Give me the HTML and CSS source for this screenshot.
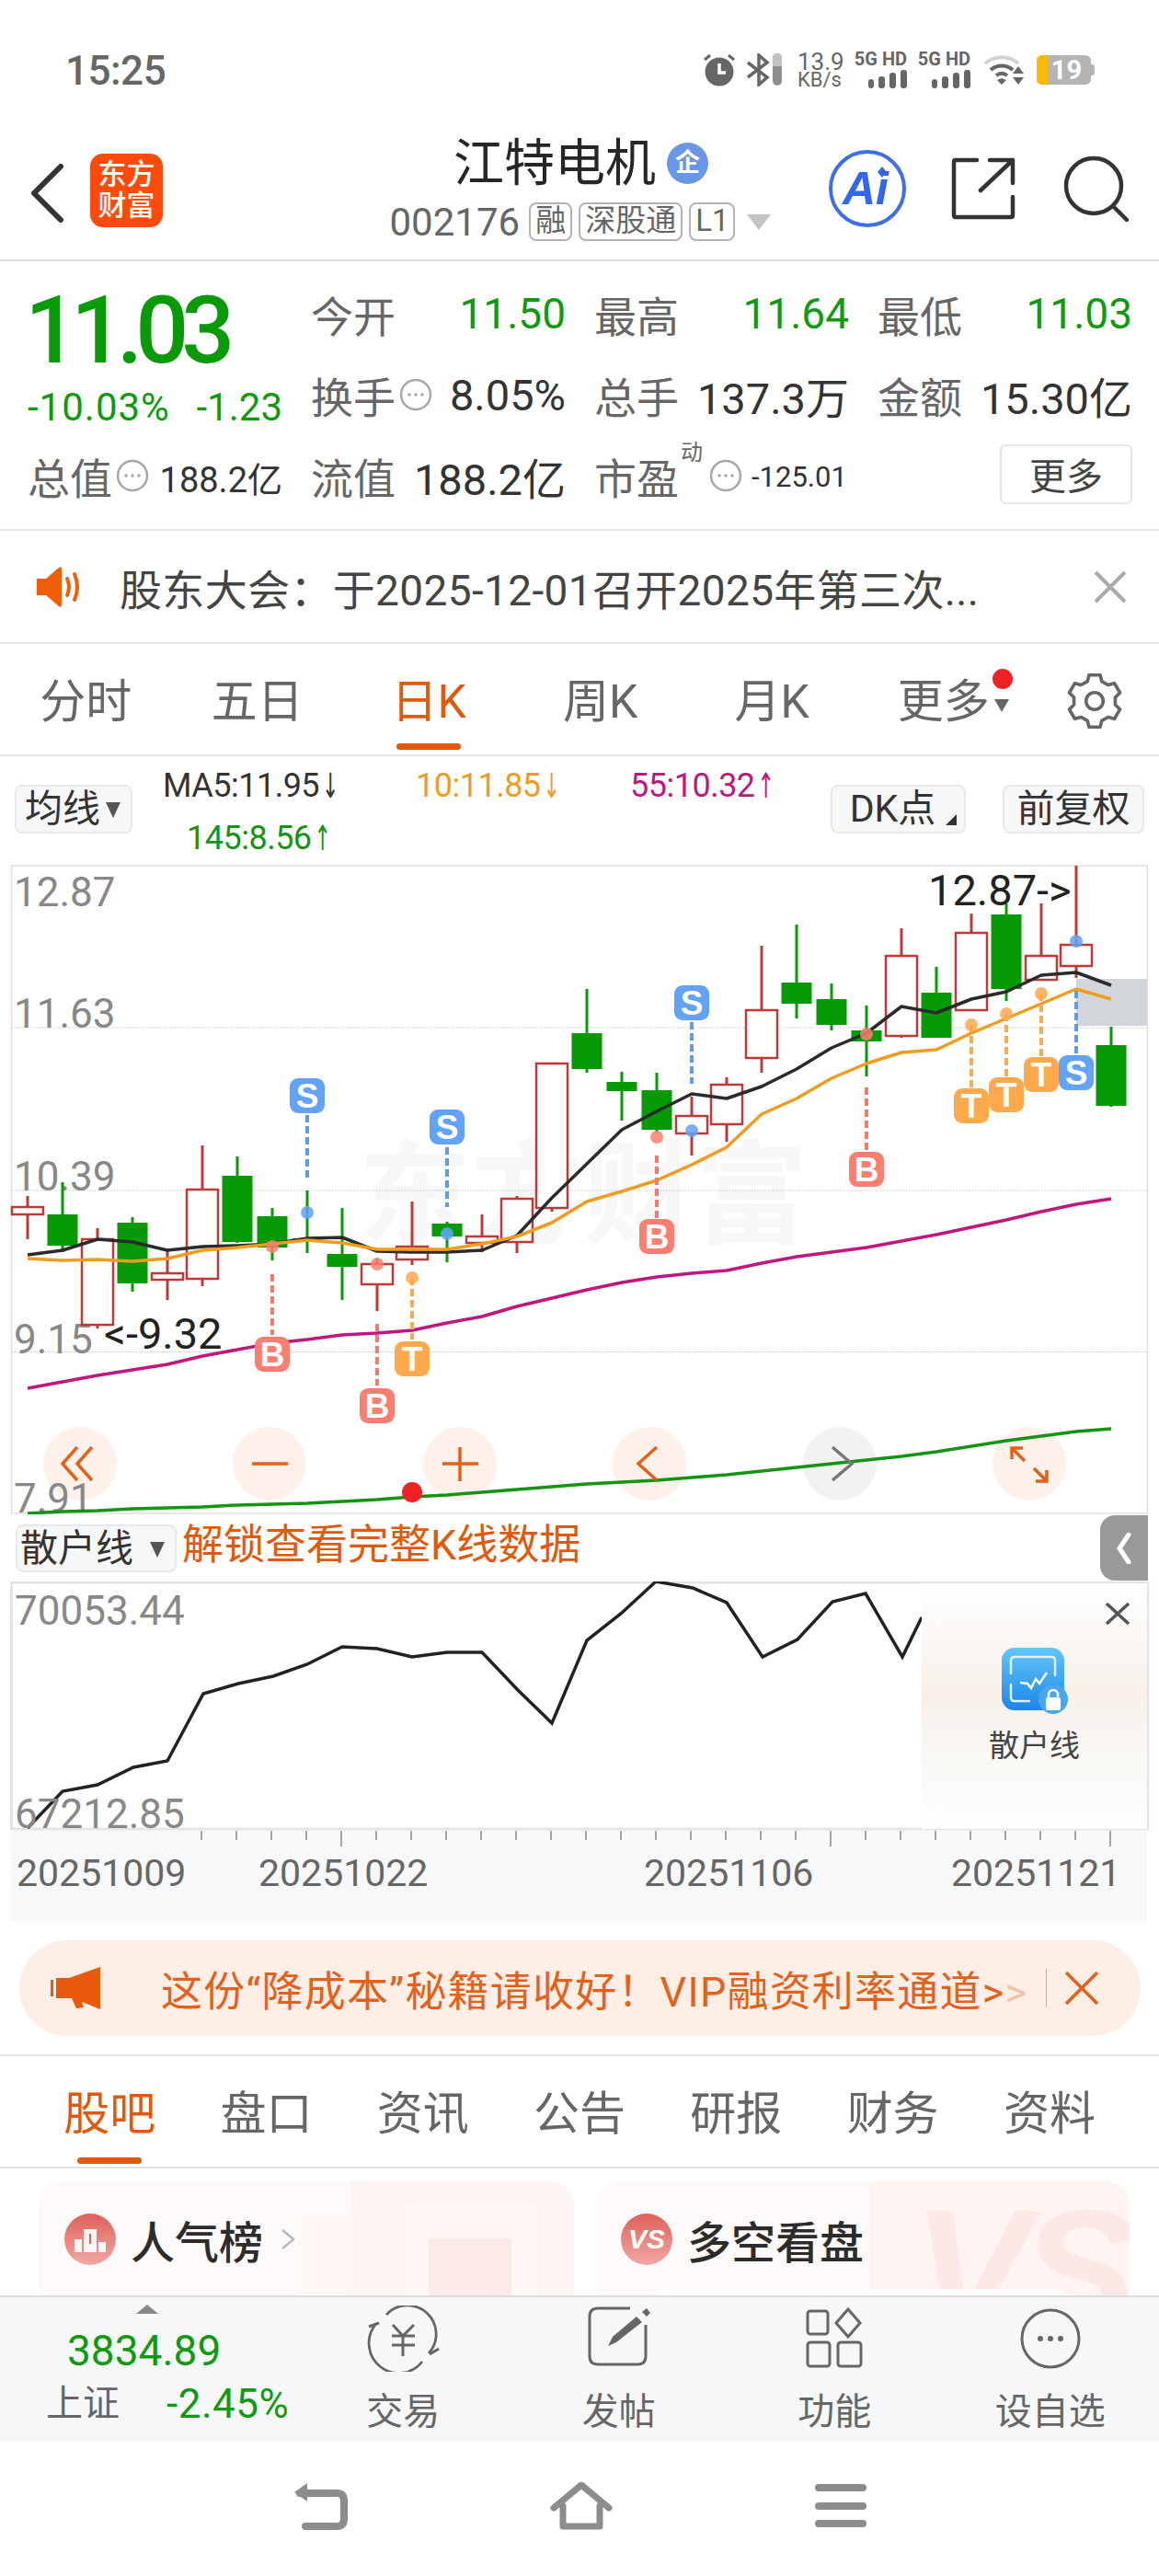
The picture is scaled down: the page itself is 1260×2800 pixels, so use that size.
FILE: index.html
```html
<!DOCTYPE html>
<html lang="zh-CN">
<head>
  <meta charset="UTF-8">
  <meta name="viewport" content="width=device-width, initial-scale=1.0">
  <title>江特电机</title>
  <link rel="stylesheet" href="styles.css">
</head>
<body>
  <svg class="defs" width="0" height="0">
    <symbol id="dots" viewBox="0 0 36 36">
      <circle cx="18" cy="18" r="16" fill="none" stroke="#a8a8a8" stroke-width="2.5"/>
      <circle cx="11" cy="18" r="1.8" fill="#a8a8a8"/>
      <circle cx="18" cy="18" r="1.8" fill="#a8a8a8"/>
      <circle cx="25" cy="18" r="1.8" fill="#a8a8a8"/>
    </symbol>
    <symbol id="cell-bars" viewBox="0 0 42 20">
      <rect x="0" y="10" width="6" height="10" rx="3"/>
      <rect x="11" y="7" width="7" height="13" rx="3"/>
      <rect x="23" y="3" width="7" height="17" rx="3"/>
      <rect x="35" y="0" width="7" height="20" rx="3"/>
    </symbol>
  </svg>

  <div class="status-bar">
    <span class="clock">15:25</span>
    <div class="status-icons">
      <svg class="ic-alarm" width="36" height="36" viewBox="0 0 36 36">
        <circle cx="18" cy="20" r="15.5" fill="#666"/>
        <path d="M18 11v10h7" fill="none" stroke="#fff" stroke-width="3.5"/>
        <path d="M2 7l6-5M34 7l-6-5" fill="none" stroke="#666" stroke-width="3"/>
      </svg>
      <svg class="ic-bt" width="38" height="36" viewBox="0 0 38 36">
        <path d="M1 10l21 16-9 8V2l9 8L1 26" fill="none" stroke="#666" stroke-width="3.5"/>
        <rect x="28" y="0" width="10" height="35" rx="5" fill="#8e8e8e"/>
        <path d="M28 14h10V5a5 5 0 0 0-10 0z" fill="#c2c2c2"/>
      </svg>
      <div class="speed"><span>13.9</span><span class="speed-unit">KB/s</span></div>
      <div class="cell"><span>5G HD</span><svg width="42" height="20"><use href="#cell-bars"/></svg></div>
      <div class="cell"><span>5G HD</span><svg width="42" height="20"><use href="#cell-bars"/></svg></div>
      <svg class="ic-wifi" width="44" height="34" viewBox="0 0 44 34">
        <path d="M1 10C11 1 27 1 37 10" fill="none" stroke="#d2d2d2" stroke-width="4"/>
        <path d="M7 17c7-6 17-6 24 0M13 23c4-3 8-3 12 0" fill="none" stroke="#666" stroke-width="4"/>
        <path d="M14 28l5-2 5 2-5 5z" fill="#666"/>
        <path d="M37 13l6 8H31zM31 25h12l-6 8z" fill="#666"/>
      </svg>
      <div class="battery-wrap">
        <div class="battery"><span class="battery-fill"></span><span class="battery-num">19</span></div>
        <i class="battery-nub"></i>
      </div>
    </div>
  </div>

  <header class="top-bar">
    <div class="top-left">
      <svg class="ic-back" width="38" height="64" viewBox="0 0 38 64">
        <path d="M34 3L5 32l29 29" fill="none" stroke="#333" stroke-width="6" stroke-linecap="round" stroke-linejoin="round"/>
      </svg>
      <div class="logo">东方<br>财富</div>
    </div>
    <div class="stock-id">
      <div class="stock-name">江特电机<span class="qi">企</span></div>
      <div class="stock-code">002176
        <span class="tag">融</span><span class="tag">深股通</span><span class="tag">L1</span>
        <span class="code-arrow"></span>
      </div>
    </div>
    <div class="top-right">
      <svg width="86" height="86" viewBox="0 0 86 86">
        <circle cx="43" cy="43" r="40" fill="none" stroke="#3e6fe6" stroke-width="4"/>
        <text class="ai-text" x="41" y="60">Ai</text>
        <path d="M59 19l5 6-5 6-5-6z" fill="#3366f0"/>
      </svg>
      <svg class="ic-share" width="70" height="68" viewBox="0 0 70 68">
        <path d="M28 3H5Q3 3 3 5v58q0 2 2 2h60q2 0 2-2V43M42 3h25v25M67 3L32 36" fill="none" stroke="#333" stroke-width="4.5" stroke-linecap="round" stroke-linejoin="round"/>
      </svg>
      <svg class="ic-search" width="72" height="72" viewBox="0 0 72 72">
        <circle cx="34" cy="33" r="30" fill="none" stroke="#333" stroke-width="4.5"/>
        <path d="M55 55l15 15" stroke="#333" stroke-width="4.5" stroke-linecap="round"/>
      </svg>
    </div>
  </header>

  <section class="quote">
    <div class="price-box">
      <div class="price">11.03</div>
      <div class="change"><span class="change-pct">-10.03%</span><span>-1.23</span></div>
    </div>
    <div class="stat"><span>今开</span><span class="down">11.50</span></div>
    <div class="stat"><span>最高</span><span class="down">11.64</span></div>
    <div class="stat"><span>最低</span><span class="down">11.03</span></div>
    <div class="stat"><span>换手<svg class="dots"><use href="#dots"/></svg></span><span class="val">8.05%</span></div>
    <div class="stat"><span>总手</span><span class="val">137.3万</span></div>
    <div class="stat"><span>金额</span><span class="val">15.30亿</span></div>
    <div class="stat"><span>总值<svg class="dots"><use href="#dots"/></svg></span><span class="val small">188.2亿</span></div>
    <div class="stat"><span>流值</span><span class="val">188.2亿</span></div>
    <div class="stat"><span>市盈<sup class="sup">动</sup><svg class="dots"><use href="#dots"/></svg></span><span class="val tiny">-125.01</span></div>
    <div class="stat stat-end"><button class="more-btn">更多</button></div>
  </section>

  <section class="notice">
    <svg width="52" height="46" viewBox="0 0 52 46">
      <path d="M0 14h10L24 2q3-2 3 2v38q0 4-3 2L10 32H0z" fill="#f25d09"/>
      <path d="M33 14q4 9 0 18M41 9q6 14 0 28" fill="none" stroke="#f25d09" stroke-width="4" stroke-linecap="round"/>
    </svg>
    <span class="notice-text">股东大会：于2025-12-01召开2025年第三次...</span>
    <svg class="x-icon" width="36" height="36" viewBox="0 0 36 36">
      <path d="M2 2l32 32M34 2L2 34" stroke="#aaa" stroke-width="4"/>
    </svg>
  </section>

  <nav class="chart-tabs">
    <a class="tab">分时</a>
    <a class="tab">五日</a>
    <a class="tab active">日K</a>
    <a class="tab">周K</a>
    <a class="tab">月K</a>
    <a class="tab tab-more">更多<i class="red-dot"></i><i class="tab-arrow"></i></a>
    <svg class="ic-gear" width="60" height="60" viewBox="0 0 58 58">
      <path d="M23.2 1.6L34.8 1.6 36.5 8.3 43.1 12.1 49.8 10.3 55.6 20.3 50.7 25.2 50.7 32.8 55.6 37.7 49.8 47.7 43.1 45.9 36.5 49.7 34.8 56.4 23.2 56.4 21.5 49.7 14.9 45.9 8.2 47.7 2.4 37.7 7.3 32.8 7.3 25.2 2.4 20.3 8.2 10.3 14.9 12.1 21.5 8.3Z" fill="none" stroke="#666" stroke-width="3.5" stroke-linejoin="round"/>
      <circle cx="29" cy="29" r="9" fill="none" stroke="#666" stroke-width="3.5"/>
    </svg>
  </nav>

  <div class="ma-row">
    <button class="chip chip-ma">均线<i class="chip-arrow"></i></button>
    <div class="ma-legend">
      <span class="ma-cell ma5">MA5:11.95<b class="arrow">↓</b></span>
      <span class="ma-cell ma10">10:11.85<b class="arrow">↓</b></span>
      <span class="ma-cell ma55">55:10.32<b class="arrow">↑</b></span>
      <span class="ma-cell ma145">145:8.56<b class="arrow">↑</b></span>
    </div>
    <button class="chip chip-dk">DK点<i class="corner"></i></button>
    <button class="chip chip-fq">前复权</button>
  </div>

  <svg class="kline" width="1260" height="706" viewBox="0 940 1260 706">
    <rect class="frame" x="12.5" y="941" width="1235" height="704"/>
    <text class="watermark" x="390" y="1342">东方财富</text>
    <g id="grid"></g>
    <rect x="1170" y="1064" width="77" height="51" fill="#d2d5da"/>
    <text class="axis-label" x="15" y="985">12.87</text>
    <text class="axis-label" x="15" y="1117">11.63</text>
    <text class="axis-label" x="15" y="1294">10.39</text>
    <text class="axis-label" x="15" y="1471">9.15</text>
    <g id="candles"></g>
    <g id="lines"></g>
    <g id="marks"></g>
    <text class="extreme" x="113" y="1466">&lt;-9.32</text>
    <text class="extreme" x="1009" y="984">12.87-&gt;</text>

    <circle class="zoom-btn" cx="87" cy="1591" r="40"/>
    <circle class="zoom-btn" cx="293" cy="1591" r="40"/>
    <circle class="zoom-btn" cx="500" cy="1591" r="40"/>
    <circle class="zoom-btn" cx="706" cy="1591" r="40"/>
    <circle class="zoom-btn off" cx="913" cy="1591" r="40"/>
    <circle class="zoom-btn" cx="1119" cy="1591" r="40"/>
    <text class="axis-label" x="15" y="1644">7.91</text>
    <path class="ma-145" id="ma145" d=""/>
    <circle cx="448" cy="1622" r="11" fill="#ee2222"/>
    <path class="zoom-ic" d="M84 1573l-16 18 16 18M100 1573l-16 18 16 18"/>
    <path class="zoom-ic" d="M274 1591h39"/>
    <path class="zoom-ic" d="M481 1591h39M500 1573v37"/>
    <path class="zoom-ic" d="M714 1573l-20 18 20 18"/>
    <path class="zoom-ic off" d="M905 1573l21 18-21 18"/>
    <path class="zoom-ic" d="M1112 1574h-12v12M1100 1574l14 14M1126 1610h12v-12M1138 1610l-14-14"/>
  </svg>

  <div class="sub-head">
    <button class="chip chip-sub">散户线<i class="chip-arrow"></i></button>
    <span class="unlock">解锁查看完整K线数据</span>
    <div class="side-tab">
      <svg width="16" height="34" viewBox="0 0 16 34">
        <path d="M13 2L3 17l10 15" fill="none" stroke="#fff" stroke-width="5" stroke-linecap="round"/>
      </svg>
    </div>
  </div>

  <div class="sub-chart">
    <svg width="1260" height="370" viewBox="0 1719 1260 370">
      <rect x="12" y="1990" width="1235" height="99" fill="#f7f8fa"/>
      <rect class="frame thick" x="12.5" y="1720" width="1235" height="268"/>
      <path id="subLine" class="sub-line" d=""/>
      <text class="axis-label" x="16" y="1766">70053.44</text>
      <text class="axis-label" x="16" y="1987">67212.85</text>
      <g id="ticks"></g>
      <text class="date" x="18" y="2050">20251009</text>
      <text class="date" x="281" y="2050">20251022</text>
      <text class="date" x="700" y="2050">20251106</text>
      <text class="date" x="1034" y="2050">20251121</text>
    </svg>
    <div class="promo">
      <svg class="promo-x" width="28" height="24" viewBox="0 0 28 24">
        <path d="M2 1l24 22M26 1L2 23" stroke="#555" stroke-width="3.5"/>
      </svg>
      <svg class="promo-icon" width="72" height="72" viewBox="0 0 72 72">
        <defs>
          <linearGradient id="promoBlue" x1="0" y1="0" x2="0" y2="1">
            <stop offset="0" stop-color="#63c6fb"/>
            <stop offset="1" stop-color="#1b86e6"/>
          </linearGradient>
        </defs>
        <rect x="0" y="0" width="68" height="68" rx="14" fill="url(#promoBlue)"/>
        <path d="M10 28V14q0-4 4-4h40q4 0 4 4v16M10 40v14q0 4 4 4h16" fill="none" stroke="#dff3ff" stroke-width="2.5" stroke-linecap="round"/>
        <path d="M20 38l8 1 4 5 5-10 4 5 8-12" fill="none" stroke="#fff" stroke-width="2.5"/>
        <circle cx="56" cy="56" r="16" fill="#4aa6ee"/>
        <rect x="48" y="54" width="16" height="14" rx="2" fill="#fff"/>
        <path d="M51 54v-3a5 5 0 0 1 10 0v3" fill="none" stroke="#fff" stroke-width="2.5"/>
      </svg>
      <span class="promo-text">散户线</span>
    </div>
  </div>

  <section class="banner-wrap">
    <div class="banner">
      <svg class="banner-ic" width="56" height="46" viewBox="0 0 56 46">
        <path d="M0 14h3v18H0zM6 12h14L54 0v46L34 38l2 6-8 1-5-11H6z" fill="#e85b0c"/>
      </svg>
      <span class="banner-text">这份“降成本”秘籍请收好！VIP融资利率通道&gt;<em>&gt;</em></span>
      <i class="banner-sep"></i>
      <svg width="38" height="36" viewBox="0 0 38 36">
        <path d="M2 1l34 34M36 1L2 35" stroke="#e2611c" stroke-width="3.5"/>
      </svg>
    </div>
  </section>

  <nav class="stock-tabs">
    <a class="tab2 active">股吧</a>
    <a class="tab2">盘口</a>
    <a class="tab2">资讯</a>
    <a class="tab2">公告</a>
    <a class="tab2">研报</a>
    <a class="tab2">财务</a>
    <a class="tab2">资料</a>
  </nav>

  <section class="cards">
    <div class="card card-rank">
      <i class="rank-low"></i><i class="rank-step1"></i><i class="rank-step2"></i><i class="rank-step3"></i>
      <svg class="card-ic" width="56" height="56" viewBox="0 0 56 56">
        <defs>
          <linearGradient id="cardRed" x1="0" y1="0" x2="0" y2="1">
            <stop offset="0" stop-color="#e0605a"/>
            <stop offset="1" stop-color="#f0a8a4"/>
          </linearGradient>
        </defs>
        <circle cx="28" cy="28" r="28" fill="url(#cardRed)"/>
        <path d="M11 28h8v14h-8zM21 17h14v25H21zM37 31h8v11h-8z" fill="#fff" opacity=".9"/>
        <path d="M28 22v11" stroke="#d9605a" stroke-width="2"/>
      </svg>
      <span class="card-title">人气榜</span>
      <svg class="card-arrow" width="18" height="24" viewBox="0 0 18 24">
        <path d="M3 2l12 10-12 10" fill="none" stroke="#b8b8b8" stroke-width="2.5"/>
      </svg>
    </div>
    <div class="card card-vs">
      <i class="vs-panel"></i>
      <span class="vs-mark">VS</span>
      <i class="vs-strip"></i>
      <svg class="card-ic" width="56" height="56" viewBox="0 0 56 56">
        <circle cx="28" cy="28" r="28" fill="url(#cardRed)"/>
        <text class="vs-text" x="28" y="38">VS</text>
      </svg>
      <span class="card-title">多空看盘</span>
    </div>
  </section>

  <footer class="bottom-nav">
    <div class="index">
      <i class="index-arrow"></i>
      <div class="index-num">3834.89</div>
      <div class="index-row"><span class="index-name">上证</span><span class="index-pct">-2.45%</span></div>
    </div>
    <div class="nav-item">
      <svg width="80" height="72" viewBox="0 0 80 72">
        <path d="M22 10A31 31 0 0 1 68 52M61 61A31 31 0 0 1 10 21" fill="none" stroke="#666" stroke-width="2.8"/>
        <path d="M3 23l11-4M69 53l10-6" fill="none" stroke="#666" stroke-width="3"/>
        <path d="M29 21l11 12 12-12M28 33h25M28 43h25M40 33v22" fill="none" stroke="#666" stroke-width="3"/>
      </svg>
      <span>交易</span>
    </div>
    <div class="nav-item">
      <svg width="70" height="72" viewBox="0 0 70 72">
        <path d="M47 3H12Q3 3 3 12v43q0 9 9 9h43q9 0 9-9V21" fill="none" stroke="#666" stroke-width="3"/>
        <path d="M54 12l6 6-28 22-9 4 5-10zM60 7l5-4 4 5-4 4z" fill="#666"/>
      </svg>
      <span>发帖</span>
    </div>
    <div class="nav-item">
      <svg width="62" height="72" viewBox="0 0 62 72">
        <g fill="none" stroke="#666" stroke-width="3">
          <rect x="2" y="6" width="22" height="25" rx="3"/>
          <path d="M46 4l13 15-13 15-13-15z"/>
          <rect x="2" y="40" width="24" height="26" rx="3"/>
          <rect x="35" y="40" width="25" height="26" rx="3"/>
        </g>
      </svg>
      <span>功能</span>
    </div>
    <div class="nav-item">
      <svg width="68" height="72" viewBox="0 0 68 72">
        <circle cx="34" cy="36" r="31" fill="none" stroke="#666" stroke-width="3"/>
        <circle cx="23" cy="36" r="3" fill="#666"/>
        <circle cx="34" cy="36" r="3" fill="#666"/>
        <circle cx="45" cy="36" r="3" fill="#666"/>
      </svg>
      <span>设自选</span>
    </div>
  </footer>

  <div class="gesture-bar">
    <svg width="60" height="52" viewBox="0 0 60 52">
      <path d="M8 12h40q8 0 8 8v20q0 8-8 8H14" fill="none" stroke="#8c8c8c" stroke-width="8" stroke-linecap="round"/>
      <path d="M2 11L16 1v20z" fill="#8c8c8c"/>
    </svg>
    <svg width="68" height="54" viewBox="0 0 68 54">
      <path d="M4 28L34 3l30 25M14 26v22h40V26" fill="none" stroke="#8c8c8c" stroke-width="7" stroke-linecap="round" stroke-linejoin="round"/>
    </svg>
    <svg width="56" height="50" viewBox="0 0 56 50">
      <path d="M4 6h48M4 26h48M4 45h48" stroke="#8c8c8c" stroke-width="8" stroke-linecap="round"/>
    </svg>
  </div>

  <script>
    const GREEN = 0;
    const RED = 1;

    // [high, bodyTop, bodyBottom, low, colour], page y coordinates
    const candles = [
      [1300, 1312, 1320, 1347, RED], [1285, 1320, 1354, 1361, GREEN],
      [1335, 1347, 1440, 1444, RED], [1323, 1329, 1395, 1404, GREEN],
      [1357, 1384, 1391, 1413, RED], [1245, 1293, 1390, 1398, RED],
      [1257, 1278, 1350, 1351, GREEN], [1313, 1322, 1356, 1370, GREEN],
      [1294, 1346, 1349, 1362, GREEN], [1313, 1363, 1377, 1413, GREEN],
      [1368, 1374, 1396, 1425, RED], [1306, 1355, 1369, 1375, RED],
      [1328, 1330, 1344, 1372, GREEN], [1320, 1344, 1351, 1361, RED],
      [1300, 1303, 1350, 1362, RED], [1156, 1156, 1313, 1317, RED],
      [1075, 1123, 1162, 1166, GREEN], [1165, 1176, 1186, 1218, GREEN],
      [1166, 1185, 1228, 1231, GREEN], [1192, 1213, 1232, 1256, RED],
      [1171, 1179, 1222, 1241, RED], [1028, 1098, 1150, 1166, RED],
      [1005, 1068, 1091, 1107, GREEN], [1069, 1086, 1114, 1120, GREEN],
      [1093, 1120, 1132, 1170, GREEN], [1009, 1039, 1126, 1128, RED],
      [1051, 1079, 1128, 1128, GREEN], [993, 1014, 1098, 1098, RED],
      [982, 994, 1075, 1088, GREEN], [982, 1039, 1065, 1065, RED],
      [941, 1027, 1050, 1063, RED], [1116, 1136, 1202, 1203, GREEN]
    ];

    const ma5 = [1364, 1359, 1347, 1350, 1359, 1355, 1354, 1352, 1346, 1345, 1360, 1361, 1361, 1359, 1343, 1302,
      1265, 1228, 1208, 1189, 1194, 1181, 1162, 1139, 1123, 1094, 1101, 1086, 1078, 1060, 1057, 1071];
    const ma10 = [1368, 1370, 1369, 1371, 1368, 1359, 1356, 1352, 1348, 1351, 1358, 1358, 1358, 1352, 1344, 1329,
      1306, 1295, 1283, 1266, 1247, 1211, 1194, 1172, 1156, 1144, 1141, 1123, 1107, 1091, 1075, 1086];
    const ma55 = [1509, 1502, 1495, 1489, 1483, 1474, 1467, 1460, 1456, 1451, 1449, 1446, 1438, 1431, 1420, 1411,
      1402, 1394, 1388, 1384, 1381, 1373, 1366, 1361, 1356, 1349, 1342, 1334, 1326, 1317, 1309, 1303];
    const ma145 = [1645, 1643, 1642, 1640, 1639, 1638, 1636, 1635, 1634, 1632, 1630, 1627, 1625, 1622, 1619, 1616,
      1613, 1611, 1609, 1606, 1603, 1599, 1595, 1591, 1587, 1583, 1578, 1572, 1566, 1561, 1556, 1553];

    // [candle index, letter, dot y, dash start, dash end, badge top]
    const marks = [
      [8, 'S', 1318, 1212, 1280, 1172], [7, 'B', 1355, 1385, 1451, 1453],
      [10, 'B', 1374, 1439, 1506, 1509], [11, 'T', 1389, 1389, 1456, 1458],
      [12, 'S', 1341, 1247, 1312, 1206], [18, 'B', 1236, 1256, 1324, 1325],
      [19, 'S', 1229, 1111, 1178, 1071], [24, 'B', 1124, 1182, 1250, 1252],
      [27, 'T', 1114, 1114, 1182, 1183], [28, 'T', 1102, 1102, 1171, 1171],
      [29, 'T', 1080, 1080, 1148, 1149], [30, 'S', 1023, 1077, 1146, 1147]
    ];

    const subPoints = [[30, 1987], [68, 1947], [106, 1940], [145, 1921], [182, 1914], [221, 1841], [259, 1830],
      [297, 1822], [334, 1809], [372, 1790], [410, 1792], [448, 1801], [486, 1796], [524, 1796], [563, 1837],
      [600, 1873], [638, 1783], [675, 1754], [713, 1719], [753, 1726], [790, 1742], [829, 1801], [867, 1782],
      [905, 1741], [941, 1732], [981, 1801], [1002, 1758]];

    const xAt = i => 30 + 38 * i;
    const linePath = ys => 'M' + ys.map((y, i) => xAt(i) + ' ' + y).join('L');

    // Price grid
    document.getElementById('grid').innerHTML = [1117, 1294, 1469.5]
      .map(y => `<path class="grid-line" d="M13 ${y}H1247"/>`).join('');

    // Candles
    document.getElementById('candles').innerHTML = candles.map((c, i) => {
      const x = xAt(i);
      const [high, top, bottom, low, colour] = c;
      if (colour === RED) {
        return `<path class="wick-red" d="M${x} ${high}V${top}M${x} ${bottom}V${low}"/>` +
          `<rect class="body-red" x="${x - 17}" y="${top}" width="34" height="${bottom - top}"/>`;
      }
      return `<path class="wick-green" d="M${x} ${high}V${low}"/>` +
        `<rect class="body-green" x="${x - 16.5}" y="${top}" width="33" height="${bottom - top}"/>`;
    }).join('');

    // Moving averages
    document.getElementById('lines').innerHTML =
      `<path class="ma-5" d="${linePath(ma5)}"/>` +
      `<path class="ma-10" d="${linePath(ma10)}"/>` +
      `<path class="ma-55" d="${linePath(ma55)}"/>`;
    document.getElementById('ma145').setAttribute('d', linePath(ma145));

    // B / S / T markers
    document.getElementById('marks').innerHTML = marks.map(([i, letter, dotY, from, to, top]) => {
      const x = xAt(i);
      const kind = 'mark-' + letter.toLowerCase();
      return `<g class="${kind}">` +
        `<path class="mark-dash" d="M${x} ${from}V${to}"/>` +
        `<circle class="mark-dot" cx="${x}" cy="${dotY}" r="7"/>` +
        `<rect class="mark-box" x="${x - 19}" y="${top}" width="38" height="38" rx="9"/>` +
        `<text class="mark-letter" x="${x}" y="${top + 32}">${letter}</text></g>`;
    }).join('');

    // Lower chart
    document.getElementById('subLine').setAttribute('d', 'M' + subPoints.map(p => p.join(' ')).join('L'));

    let ticks = '';
    for (let i = 5; i <= 31; i++) {
      const major = i === 9 || i === 23 || i === 31;
      ticks += `<path class="tick" d="M${xAt(i) - 1} 1990V${major ? 2007 : 2000}"/>`;
    }
    document.getElementById('ticks').innerHTML = ticks;
  </script>
</body>
</html>
```

FILE: styles.css
```css
* {
  box-sizing: border-box;
}
html, body {
  margin: 0;
  padding: 0;
}
body {
  width: 1260px;
  height: 2800px;
  overflow: hidden;
  background-color: #fff;
  color: #333;
  font-family: Roboto, "Noto Sans CJK SC", sans-serif;
}
button {
  font-family: inherit;
  padding: 0;
}
.defs {
  position: absolute;
}

/* status bar */
.status-bar {
  display: flex;
  justify-content: space-between;
  align-items: center;
  height: 130px;
  padding: 24px 70px 0 71px;
  color: #666;
}
.clock {
  font-size: 44px;
  font-weight: 500;
  letter-spacing: -0.5px;
}
.status-icons {
  display: flex;
  align-items: center;
  gap: 12px;
  margin-top: -2px;
}
.speed {
  display: flex;
  flex-direction: column;
  width: 50px;
  margin-left: 5px;
  font-size: 26px;
  line-height: 22px;
  white-space: nowrap;
}
.speed-unit {
  font-size: 22px;
  line-height: 18px;
}
.cell {
  display: flex;
  flex-direction: column;
  align-items: flex-end;
  gap: 3px;
  width: 57px;
  font-size: 20px;
  font-weight: 700;
  line-height: 17px;
  white-space: nowrap;
  fill: #666;
}
.cell:first-of-type {
  margin-left: 5px;
}
.ic-wifi {
  margin-left: 3px;
}
.battery-wrap {
  display: flex;
  align-items: center;
  margin-left: 1px;
}
.battery {
  position: relative;
  width: 59px;
  height: 32px;
  overflow: hidden;
  border-radius: 6px;
  background-color: #b4b4b4;
  color: #fff;
  font-size: 29px;
  font-weight: 700;
  line-height: 32px;
  text-align: center;
}
.battery-fill {
  position: absolute;
  left: 0;
  top: 0;
  width: 12px;
  height: 32px;
  background-color: #fdb900;
}
.battery-num {
  position: relative;
  margin-left: 6px;
}
.battery-nub {
  width: 4px;
  height: 12px;
  border-radius: 0 3px 3px 0;
  background-color: #b4b4b4;
}

/* title bar */
.top-bar {
  display: grid;
  grid-template-columns: 1fr auto 1fr;
  height: 154px;
  border-bottom: 2px solid #dedede;
}
.top-left {
  display: flex;
  align-items: center;
  gap: 28px;
  height: 146px;
  padding-left: 32px;
  padding-top: 8px;
}
.ic-back {
  margin-top: 5px;
}
.logo {
  width: 79px;
  height: 80px;
  padding-top: 6px;
  border-radius: 14px;
  background-color: #ff4a0c;
  color: #fff;
  font-size: 31px;
  font-weight: 500;
  line-height: 34px;
  text-align: center;
}
.stock-id {
  padding-top: 16px;
  text-align: center;
}
.stock-name {
  display: flex;
  justify-content: center;
  align-items: center;
  gap: 12px;
  height: 62px;
  color: #262626;
  font-size: 55px;
  line-height: 62px;
  padding-left: 3px;
}
.qi {
  width: 45px;
  height: 45px;
  border-radius: 50%;
  background-color: #6a96e6;
  color: #fff;
  font-size: 27px;
  font-weight: 700;
  line-height: 44px;
}
.stock-code {
  display: flex;
  justify-content: center;
  align-items: center;
  height: 46px;
  margin-top: 10px;
  padding-left: 2px;
  color: #666;
  font-size: 42px;
}
.tag {
  height: 42px;
  margin-left: 7px;
  padding: 0 5px;
  border: 2px solid #b4b4b4;
  border-radius: 8px;
  color: #666;
  font-size: 33px;
  line-height: 36px;
}
.stock-code .tag:first-child {
  margin-left: 10px;
}
.code-arrow {
  width: 0;
  height: 0;
  margin-left: 13px;
  border-style: solid;
  border-width: 17px 13px 0;
  border-color: #c4c4c4 transparent transparent;
}
.top-right {
  display: flex;
  justify-content: flex-end;
  align-items: center;
  gap: 48px;
  height: 148px;
  padding-right: 33px;
  padding-top: 2px;
}
.ic-search {
  margin-left: 3px;
}
.ai-text {
  fill: #3366f0;
  font-family: "Liberation Sans", sans-serif;
  font-size: 50px;
  font-style: italic;
  font-weight: 700;
  text-anchor: middle;
}

/* quote block */
.quote {
  display: grid;
  grid-template-columns: repeat(4, 277px);
  grid-auto-rows: 88px;
  column-gap: 31px;
  height: 293px;
  padding: 13px 0 0 30px;
  border-bottom: 2px solid #e8e8e8;
  color: #666;
  font-size: 46px;
}
.price-box {
  grid-row: 1 / span 2;
}
.price {
  height: 104px;
  margin-top: 10px;
  margin-left: -3px;
  color: #099a0a;
  font-size: 102px;
  font-weight: 500;
  letter-spacing: -8px;
  line-height: 104px;
}
.change {
  display: flex;
  justify-content: space-between;
  margin-top: 7px;
  color: #0f9a10;
  font-size: 42px;
  line-height: 50px;
}
.change-pct {
  letter-spacing: 1px;
}
.stat {
  display: flex;
  justify-content: space-between;
  align-items: center;
  height: 88px;
  white-space: nowrap;
}
.stat > span:first-child {
  display: flex;
  align-items: center;
}
.down {
  color: #0f9a10;
}
.val {
  color: #333;
  font-size: 47px;
}
.val.small {
  font-size: 38px;
  margin-top: 3px;
}
.val.tiny {
  margin-right: auto;
  margin-left: 10px;
  font-size: 31px;
  margin-top: 3px;
}
.dots {
  width: 36px;
  height: 36px;
  margin-left: 4px;
}
.sup {
  align-self: flex-start;
  margin: -4px 3px 0 2px;
  font-size: 24px;
  line-height: 24px;
}
.stat-end {
  justify-content: flex-end;
}
.more-btn {
  width: 144px;
  height: 65px;
  border: 2px solid #e6e6e6;
  border-radius: 6px;
  background-color: #fff;
  color: #444;
  font-size: 40px;
  margin-top: -4px;
}

/* notice */
.notice {
  display: flex;
  align-items: center;
  height: 123px;
  padding: 0 35px 0 40px;
  border-bottom: 2px solid #e4e4e4;
}
.notice-text {
  flex: 1;
  margin-left: 38px;
  color: #444;
  font-size: 46px;
  letter-spacing: 0.35px;
  white-space: nowrap;
}

/* k line tabs */
.chart-tabs {
  display: grid;
  grid-template-columns: repeat(6, 186.5px) 1fr;
  align-items: center;
  height: 122px;
  border-bottom: 2px solid #e4e4e4;
}
.tab {
  position: relative;
  color: #666;
  font-size: 50px;
  line-height: 126px;
  text-align: center;
}
.tab.active {
  color: #e05a0e;
}
.tab.active::after {
  content: "";
  position: absolute;
  left: 58px;
  bottom: 11px;
  width: 70px;
  height: 7px;
  border-radius: 4px;
  background-color: #e05a0e;
}
.red-dot {
  position: absolute;
  left: 146px;
  top: 27px;
  width: 22px;
  height: 22px;
  border-radius: 50%;
  background-color: #ee2222;
}
.tab-arrow {
  position: absolute;
  left: 148px;
  top: 60px;
  border-style: solid;
  border-width: 14px 8px 0;
  border-color: #666 transparent transparent;
}
.ic-gear {
  justify-self: center;
  margin-top: -2px;
}

/* moving average row */
.ma-row {
  position: relative;
  display: flex;
  height: 118px;
  padding-left: 16px;
}
.chip {
  position: relative;
  height: 53px;
  margin-top: 31px;
  border: 2px solid #e8e9ec;
  border-radius: 8px;
  background-color: #f6f7f9;
  color: #333;
  font-size: 41px;
  line-height: 49px;
  white-space: nowrap;
}
.chip-ma {
  width: 128px;
  padding-right: 24px;
}
.chip-arrow {
  position: absolute;
  right: 11px;
  top: 17px;
  border-style: solid;
  border-width: 17px 8px 0;
  border-color: #555 transparent transparent;
}
.ma-legend {
  display: grid;
  grid-template-columns: 275px 233px 180px;
  grid-auto-rows: 57px;
  width: 759px;
  height: 118px;
  padding: 4px 0 0 33px;
  font-size: 36px;
  line-height: 57px;
  letter-spacing: -0.5px;
}
.ma-cell {
  white-space: nowrap;
}
.arrow {
  margin-left: 3px;
  font-family: "DejaVu Sans", sans-serif;
  font-size: 22px;
  font-weight: 400;
  display: inline-block;
  transform: scaleY(1.7);
  transform-origin: 50% 60%;
}
.ma5 {
  color: #333;
}
.ma10 {
  color: #f09c1e;
}
.ma55 {
  color: #c0177f;
}
.ma145 {
  color: #139413;
  padding-left: 26px;
}
.chip-dk {
  width: 147px;
  margin-left: 0;
  padding-right: 12px;
}
.corner {
  position: absolute;
  right: 8px;
  bottom: 7px;
  width: 0;
  height: 0;
  border-style: solid;
  border-width: 0 0 12px 12px;
  border-color: transparent transparent #333;
}
.chip-fq {
  width: 154px;
  margin-left: 40px;
}

/* k line chart */
.kline, .sub-chart svg {
  display: block;
}
.frame {
  fill: none;
  stroke: #dfdfdf;
  stroke-width: 1.5;
}
.frame.thick {
  stroke: #e4e4e4;
  stroke-width: 3;
}
.watermark {
  fill: #f7f7f7;
  font-size: 122px;
  font-weight: 700;
}
.grid-line {
  stroke: #c8c8c8;
  stroke-width: 1;
  stroke-dasharray: 1.5 1.5;
}
.axis-label {
  fill: #888;
  font-size: 44px;
}
.extreme {
  fill: #222;
  font-size: 47px;
}
.wick-red {
  stroke: #bd3a3a;
  stroke-width: 3;
}
.body-red {
  fill: #fff;
  stroke: #bd3a3a;
  stroke-width: 2.5;
}
.wick-green {
  stroke: #079a07;
  stroke-width: 3;
}
.body-green {
  fill: #079a07;
}
.ma-5, .ma-10, .ma-55, .ma-145 {
  fill: none;
  stroke-width: 3.5;
  stroke-linejoin: round;
}
.ma-5 {
  stroke: #2b2b2b;
}
.ma-10 {
  stroke: #f09c1e;
}
.ma-55 {
  stroke: #c0177f;
}
.ma-145 {
  stroke: #139413;
}
.mark-dash {
  fill: none;
  stroke-width: 4;
  stroke-dasharray: 8 4;
}
.mark-dot {
  opacity: .85;
}
.mark-letter {
  fill: #fff;
  font-family: "Liberation Sans", sans-serif;
  font-size: 37px;
  font-weight: 700;
  text-anchor: middle;
}
.mark-s .mark-dash {
  stroke: #5e9be8;
}
.mark-s .mark-dot, .mark-s .mark-box {
  fill: #62a2f8;
}
.mark-b .mark-dash {
  stroke: #ee7d70;
}
.mark-b .mark-dot, .mark-b .mark-box {
  fill: #fa7f72;
}
.mark-t .mark-dash {
  stroke: #f7ab55;
}
.mark-t .mark-dot, .mark-t .mark-box {
  fill: #ffa94d;
}
.zoom-btn {
  fill: #fdf1ea;
}
.zoom-btn.off {
  fill: #f2f2f2;
}
.zoom-ic {
  fill: none;
  stroke: #e0621a;
  stroke-width: 3.5;
}
.zoom-ic.off {
  stroke: #777;
}

/* lower chart */
.sub-head {
  display: flex;
  align-items: center;
  height: 73px;
  padding-left: 17px;
}
.chip-sub {
  width: 175px;
  height: 52px;
  margin-top: 0;
  padding-right: 42px;
  text-align: center;
}
.unlock {
  margin-left: 6px;
  margin-top: -6px;
  color: #e05a0e;
  font-size: 45px;
  line-height: 60px;
}
.side-tab {
  display: flex;
  justify-content: center;
  align-items: center;
  width: 52px;
  height: 71px;
  margin-left: auto;
  margin-right: 12px;
  border-radius: 16px 0 0 16px;
  background-color: #999;
}
.sub-chart {
  position: relative;
  height: 370px;
}
.sub-line {
  fill: none;
  stroke: #222;
  stroke-width: 3.5;
}
.tick {
  stroke: #888;
  stroke-width: 1.5;
}
.date {
  fill: #666;
  font-size: 41px;
}
.promo {
  position: absolute;
  left: 1002px;
  top: 2px;
  display: flex;
  flex-direction: column;
  align-items: center;
  width: 245px;
  height: 267px;
  padding-top: 70px;
  background: linear-gradient(#fff 0%, #f7f0ea 45%, #f9f6f2 65%, #fff 100%);
}
.promo-x {
  position: absolute;
  right: 18px;
  top: 21px;
}
.promo-icon {
  margin-left: 1px;
}
.promo-text {
  margin-top: 8px;
  color: #444;
  font-size: 33px;
}

/* promo banner */
.banner-wrap {
  height: 146px;
  padding: 20px 20px 0 21px;
  border-bottom: 2px solid #e4e4e4;
}
.banner {
  display: flex;
  align-items: center;
  height: 104px;
  padding: 0 45px 0 34px;
  border-radius: 52px;
  background-color: #fdeee6;
}
.banner-text {
  flex: 1;
  margin-left: 64px;
  color: #e2611c;
  font-size: 45px;
  letter-spacing: 1.2px;
  white-space: nowrap;
}
.banner-text em {
  opacity: .3;
  font-style: normal;
}
.banner-sep {
  width: 1px;
  height: 42px;
  margin-right: 19px;
  background-color: #d9a58a;
}

/* stock tabs */
.stock-tabs {
  display: grid;
  grid-template-columns: repeat(7, 170.3px);
  height: 122px;
  padding-left: 34px;
  border-bottom: 2px solid #e4e4e4;
}
.tab2 {
  position: relative;
  color: #666;
  font-size: 50px;
  line-height: 126px;
  text-align: center;
}
.tab2.active {
  color: #e05a0e;
}
.tab2.active::after {
  content: "";
  position: absolute;
  left: 50px;
  bottom: 9px;
  width: 70px;
  height: 7px;
  border-radius: 4px;
  background-color: #e05a0e;
}

/* feature cards */
.cards {
  display: flex;
  gap: 23px;
  height: 138px;
  padding: 14px 32px 0 42px;
  overflow: hidden;
}
.card {
  position: relative;
  display: flex;
  align-items: center;
  flex: none;
  width: 582px;
  height: 200px;
  padding: 35px 0 109px 28px;
  overflow: hidden;
  border-radius: 26px;
  background-color: #fffafa;
}
.card-vs {
  width: 581px;
}
.rank-low {
  position: absolute;
  left: 283px;
  top: 36px;
  width: 100px;
  height: 164px;
  background-color: #fff7f5;
}
.rank-step1 {
  position: absolute;
  left: 340px;
  top: 0;
  width: 242px;
  height: 200px;
  background-color: #fdf5f3;
}
.rank-step2 {
  position: absolute;
  left: 398px;
  top: 27px;
  width: 144px;
  height: 173px;
  background-color: #fff8f6;
}
.rank-step3 {
  position: absolute;
  left: 424px;
  top: 62px;
  width: 90px;
  height: 138px;
  background-color: #fbeae8;
}
.card-ic {
  position: relative;
  flex: none;
}
.card-title {
  position: relative;
  margin-left: 16px;
  color: #2c2c2c;
  font-size: 48px;
  font-weight: 500;
  white-space: nowrap;
}
.card-arrow {
  position: relative;
  margin-left: 18px;
}
.vs-panel {
  position: absolute;
  left: 298px;
  top: 0;
  width: 283px;
  height: 200px;
  background-color: #fff4f1;
}
.vs-mark {
  position: absolute;
  left: 345px;
  top: -3px;
  color: #fbe8e7;
  font-family: "Liberation Sans", sans-serif;
  font-size: 190px;
  font-style: italic;
  font-weight: 700;
  letter-spacing: -10px;
  line-height: 200px;
}
.vs-strip {
  position: absolute;
  left: 64px;
  top: 117px;
  width: 450px;
  height: 30px;
  border-radius: 14px 14px 0 0;
  background-color: #fff;
}
.vs-text {
  fill: #fff;
  font-family: "Liberation Sans", sans-serif;
  font-size: 30px;
  font-style: italic;
  font-weight: 700;
  text-anchor: middle;
}

/* bottom nav */
.bottom-nav {
  position: relative;
  display: grid;
  grid-template-columns: 321px repeat(4, 234.5px);
  height: 158px;
  border-top: 2px solid #dcdcdc;
  background-color: #f6f7f9;
}
.index {
  position: relative;
  padding: 35px 0 0 50px;
}
.index-arrow {
  position: absolute;
  left: 148px;
  top: 8px;
  border-style: solid;
  border-width: 0 12px 10px;
  border-color: transparent transparent #888;
}
.index-num {
  padding-left: 23px;
  color: #0f9a10;
  font-size: 46px;
  line-height: 46px;
}
.index-row {
  display: flex;
  align-items: center;
  gap: 51px;
  margin-top: 12px;
}
.index-name {
  color: #666;
  font-size: 40px;
  line-height: 46px;
}
.index-pct {
  color: #0f9a10;
  font-size: 44px;
  letter-spacing: 0.5px;
  line-height: 46px;
}
.nav-item {
  display: flex;
  flex-direction: column;
  align-items: center;
  padding-top: 9px;
  color: #666;
  font-size: 40px;
  line-height: 46px;
}
.nav-item span {
  margin-top: 21px;
}

/* gesture bar */
.gesture-bar {
  display: flex;
  justify-content: center;
  align-items: flex-start;
  gap: 220px;
  height: 147px;
  padding-top: 45px;
}
```
